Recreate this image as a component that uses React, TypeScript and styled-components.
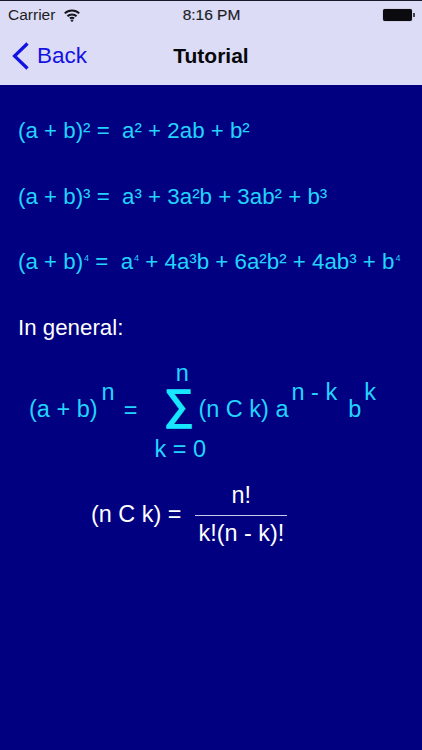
import React from "react";
import styled, { createGlobalStyle } from "styled-components";

const GlobalStyle = createGlobalStyle`
  html, body { margin: 0; padding: 0; background: #000080; }
  body { font-family: "Liberation Sans", Arial, sans-serif; }
`;

const Screen = styled.div`
  width: 422px;
  height: 750px;
  overflow: hidden;
  display: flex;
  flex-direction: column;
  background: #000080;
`;

const Header = styled.header`
  height: 85px;
  border-top: 1px solid #1a1a2a;
  box-sizing: border-box;
  background: #dcdcf6;
  display: flex;
  flex-direction: column;
`;

const StatusBar = styled.div`
  height: 28px;
  display: grid;
  grid-template-columns: 1fr auto 1fr;
  align-items: center;
  padding: 0 7px 0 8px;
  font-size: 15.5px;
  color: #1c1c24;
`;

const Carrier = styled.div`
  display: flex;
  align-items: center;
  gap: 9px;
`;

const Clock = styled.div`
  font-size: 15.5px;
  -webkit-text-stroke: 0.2px #1c1c24;
`;

const Battery = styled.div`
  justify-self: end;
  display: flex;
  align-items: center;
  gap: 1px;
`;

const BatteryBody = styled.div`
  width: 29px;
  height: 12px;
  border-radius: 2px;
  background: #0b0b0f;
  box-shadow: 0 0 1px #55555f;
`;

const BatteryTip = styled.div`
  width: 2px;
  height: 4px;
  background: #45454f;
`;

const NavBar = styled.nav`
  flex: 1;
  display: grid;
  grid-template-columns: 1fr auto 1fr;
  align-items: center;
  padding: 0 11px 2px;
`;

const BackLink = styled.div`
  display: flex;
  align-items: center;
  gap: 6px;
  color: #1212e2;
  font-size: 22.5px;
`;

const Title = styled.div`
  font-size: 21px;
  font-weight: 700;
  color: #08080c;
`;

const Content = styled.main`
  flex: 1;
  padding: 33px 0 0 18px;
  color: #22d4ff;
  font-size: 22.3px;
  line-height: 26px;
`;

const Equation = styled.div`
  height: 65.5px;
  white-space: pre;
`;

const SmallFour = styled.span`
  font-size: 9px;
  line-height: 0;
  vertical-align: 8px;
  margin-left: 1px;
`;

const General = styled.div`
  color: #ffffff;
  height: 45.5px;
`;

const BinomialRow = styled.div`
  display: flex;
  align-items: flex-start;
  margin-left: 11px;
  font-size: 23.5px;
  white-space: pre;
`;

const Term = styled.span<{ $gap?: number }>`
  margin-top: 36px;
  margin-left: ${(p) => p.$gap ?? 0}px;
`;

const BigSup = styled.span<{ $gap: number }>`
  margin-top: 19px;
  margin-left: ${(p) => p.$gap}px;
`;

const Equals = styled.span`
  margin: 37px 17px 0 9px;
`;

const SumColumn = styled.div`
  width: 52px;
  margin-right: -8px;
  display: flex;
  flex-direction: column;
  align-items: center;
`;

const SumLimit = styled.span<{ $shift?: number }>`
  line-height: 26px;
  padding-left: ${(p) => p.$shift ?? 0}px;
`;

const Sigma = styled.span`
  height: 50px;
  margin-right: 3px;
  font-size: 43px;
  line-height: 36px;
  font-weight: 700;
  color: #18e8ff;
`;

const NcK = styled.div`
  display: flex;
  align-items: center;
  color: #ffffff;
  margin: 20px 0 0 73px;
  font-size: 23.4px;
  white-space: pre;
`;

const Fraction = styled.div`
  display: flex;
  flex-direction: column;
  align-items: center;
  margin-left: 14px;
`;

const Numerator = styled.div`
  padding-bottom: 7px;
  border-bottom: 1px solid #c8c8e8;
  width: 92px;
  text-align: center;
`;

const Denominator = styled.div`
  padding-top: 4px;
`;

const BackChevron = () => (
  <svg width="20" height="30" viewBox="0 0 20 30" fill="none">
    <path d="M16.5 2.5 L3.5 15 L16.5 27.5" stroke="#1212e2" strokeWidth="3.2" />
  </svg>
);

const WifiIcon = () => (
  <svg width="16" height="13" viewBox="0 0 16 13" fill="none" stroke="#16161e" strokeWidth="2">
    <path d="M0.8 4.4 C4.6 0.6 11.4 0.6 15.2 4.4" />
    <path d="M3.4 7.2 C5.8 4.8 10.2 4.8 12.6 7.2" />
    <path d="M5.9 9.6 C7 8.6 9 8.6 10.1 9.6" />
    <path d="M6.9 11.2 L8 12.6 L9.1 11.2 Z" fill="#16161e" strokeWidth="1" />
  </svg>
);

export default function App() {
  return (
    <Screen>
      <GlobalStyle />
      <Header>
        <StatusBar>
          <Carrier>
            Carrier <WifiIcon />
          </Carrier>
          <Clock>8:16 PM</Clock>
          <Battery>
            <BatteryBody />
            <BatteryTip />
          </Battery>
        </StatusBar>
        <NavBar>
          <BackLink>
            <BackChevron />
            Back
          </BackLink>
          <Title>Tutorial</Title>
          <div />
        </NavBar>
      </Header>
      <Content>
        <Equation>(a + b)² =  a² + 2ab + b²</Equation>
        <Equation>(a + b)³ =  a³ + 3a²b + 3ab² + b³</Equation>
        <Equation>
          (a + b)<SmallFour>4</SmallFour> =  a<SmallFour>4</SmallFour> + 4a³b + 6a²b² + 4ab³ + b<SmallFour>4</SmallFour>
        </Equation>
        <General>In general:</General>
        <BinomialRow>
          <Term>(a + b)</Term>
          <BigSup $gap={4}>n</BigSup>
          <Equals>=</Equals>
          <SumColumn>
            <SumLimit $shift={4}>n</SumLimit>
            <Sigma>∑</Sigma>
            <SumLimit>k = 0</SumLimit>
          </SumColumn>
          <Term>(n C k) a</Term>
          <BigSup $gap={3}>n - k</BigSup>
          <Term $gap={11}>b</Term>
          <BigSup $gap={3}>k</BigSup>
        </BinomialRow>
        <NcK>
          (n C k) =
          <Fraction>
            <Numerator>n!</Numerator>
            <Denominator>k!(n - k)!</Denominator>
          </Fraction>
        </NcK>
      </Content>
    </Screen>
  );
}
